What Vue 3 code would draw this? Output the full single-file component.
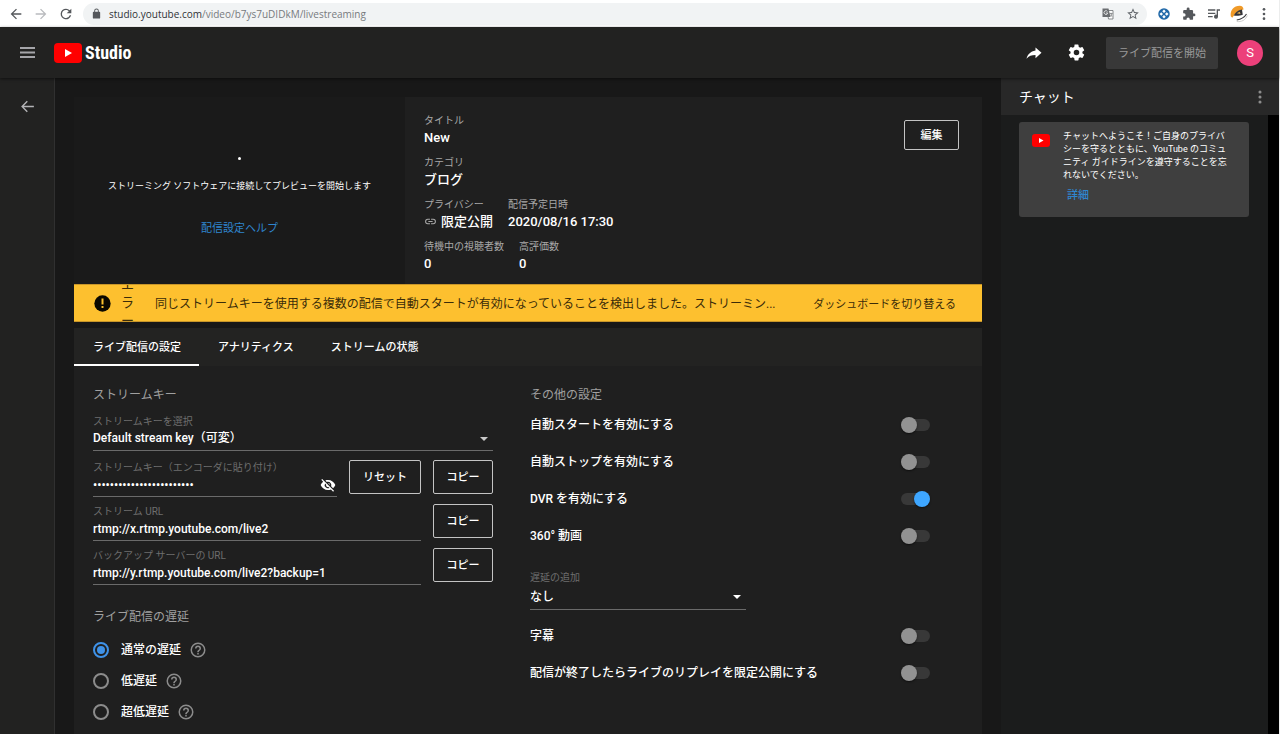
<script setup>
import { ref } from 'vue'

const details = [
  [{ label: 'タイトル', value: 'New' }],
  [{ label: 'カテゴリ', value: 'ブログ' }],
  [
    { label: 'プライバシー', value: '限定公開', link: true },
    { label: '配信予定日時', value: '2020/08/16 17:30' },
  ],
  [
    { label: '待機中の視聴者数', value: '0' },
    { label: '高評価数', value: '0' },
  ],
]

const tabs = ['ライブ配信の設定', 'アナリティクス', 'ストリームの状態']
const activeTab = ref(0)

const streamKey = ref('abcd-efgh-ijkl-mnop-qrst')
const urls = ref([
  { id: 'stream-url', label: 'ストリーム URL', value: 'rtmp://x.rtmp.youtube.com/live2' },
  { id: 'backup-url', label: 'バックアップ サーバーの URL', value: 'rtmp://y.rtmp.youtube.com/live2?backup=1' },
])

const latency = ref('normal')
const latencies = [
  { id: 'normal', label: '通常の遅延' },
  { id: 'low', label: '低遅延' },
  { id: 'ultra', label: '超低遅延' },
]

const switches = ref([
  { id: 'auto-start', label: '自動スタートを有効にする', on: false },
  { id: 'auto-stop', label: '自動ストップを有効にする', on: false },
  { id: 'dvr', label: 'DVR を有効にする', on: true },
  { id: 'video-360', label: '360° 動画', on: false },
])
const moreSwitches = ref([
  { id: 'captions', label: '字幕', on: false },
  { id: 'unlist', label: '配信が終了したらライブのリプレイを限定公開にする', on: false },
])
</script>

<template>
  <div class="window">
    <div class="browser">
      <div class="nav">
        <button class="icon-btn" aria-label="戻る">
          <svg width="16" height="16" viewBox="0 0 24 24" fill="#55585c"><path d="M20 11H7.830l5.590-5.590L12 4l-8 8 8 8 1.410-1.410L7.830 13H20z" /></svg>
        </button>
        <button class="icon-btn" aria-label="進む">
          <svg width="16" height="16" viewBox="0 0 24 24" fill="#b9bbbe"><path d="M12 4l-1.410 1.410L16.170 11H4v2h12.170l-5.580 5.590L12 20l8-8z" /></svg>
        </button>
        <button class="icon-btn" aria-label="再読み込み">
          <svg width="16" height="16" viewBox="0 0 24 24" fill="#55585c"><path d="M17.650 6.350A7.960 7.960 0 0 0 12 4a8 8 0 1 0 7.730 10h-2.080A6 6 0 1 1 12 6c1.660 0 3.140.690 4.220 1.780L13 11h7V4z" /></svg>
        </button>
      </div>
      <div class="omnibox">
        <svg width="11" height="11" viewBox="0 0 24 24" fill="#55585c"><path d="M18 8h-1V6A5 5 0 0 0 7 6v2H6a2 2 0 0 0-2 2v11a2 2 0 0 0 2 2h12a2 2 0 0 0 2-2V10a2 2 0 0 0-2-2zM9 8V6a3 3 0 0 1 6 0v2z" /></svg>
        <span class="url">studio.youtube.com<span class="path">/video/b7ys7uDIDkM/livestreaming</span></span>
        <button class="icon-btn" aria-label="翻訳">
          <svg width="12" height="12" viewBox="0 0 24 24">
            <path d="M10 5h12v17H13z" fill="#fff" stroke="#6a6d70" stroke-width="1.600" />
            <path d="M1 1h12l4 17H1z" fill="#6a6d70" />
            <path d="M11 7.300A3.700 3.700 0 1 0 11.400 10H8" fill="none" stroke="#fff" stroke-width="1.500" />
            <path d="M15 11h6M18 9.500v1.500M20 11q-1 4-4 6M16.500 13q1.500 3 4 4" fill="none" stroke="#6a6d70" stroke-width="1.300" />
          </svg>
        </button>
        <button class="icon-btn" aria-label="ブックマーク">
          <svg width="14" height="14" viewBox="0 0 24 24" fill="#5f6368"><path d="M22 9.240l-7.190-.620L12 2 9.190 8.630 2 9.240l5.460 4.730L5.820 21 12 17.270 18.180 21l-1.630-7.030zM12 15.400l-3.760 2.270 1-4.280-3.320-2.880 4.380-.380L12 6.100l1.710 4.040 4.380.380-3.320 2.880 1 4.280z" /></svg>
        </button>
      </div>
      <div class="extensions">
        <button class="icon-btn" aria-label="拡張機能 1">
          <svg width="12" height="12" viewBox="0 0 24 24"><circle cx="12" cy="12" r="11.500" fill="#2068a8" /><path d="M12 3l3.500 3.500L12 10 8.500 6.500zM12 14l3.500 3.500L12 21l-3.500-3.500zM6.500 8.500L10 12l-3.500 3.500L3 12zM17.500 8.500L21 12l-3.500 3.500L14 12z" fill="#fff" /></svg>
        </button>
        <button class="icon-btn" aria-label="拡張機能">
          <svg width="14" height="14" viewBox="0 0 24 24" fill="#55585c"><path d="M20.500 11H19V7a2 2 0 0 0-2-2h-4V3.500a2.500 2.500 0 0 0-5 0V5H4a2 2 0 0 0-2 2v3.800h1.500a2.700 2.700 0 0 1 0 5.400H2V20a2 2 0 0 0 2 2h3.800v-1.500a2.700 2.700 0 0 1 5.400 0V22H17a2 2 0 0 0 2-2v-4h1.500a2.500 2.500 0 0 0 0-5z" /></svg>
        </button>
        <button class="icon-btn" aria-label="メディア">
          <svg width="16" height="16" viewBox="0 0 24 24" fill="#55585c"><path d="M3 5h11v2H3zM3 10h11v2H3zM3 15h7v2H3zM16 5h5v2.200h-3V16a3 3 0 1 1-2-2.800z" /></svg>
        </button>
        <button class="icon-btn" aria-label="プロフィール">
          <svg width="18" height="18" viewBox="0 0 24 24"><path d="M1 15C0 7 5 1 13 1c3 0 5 2 5 5l-7 2-5 5-3 4z" fill="#f09a28" /><path d="M5 14c2-4 5-7 11-8l1 7c-4 1-7 2-12 1z" fill="#33343a" /><path d="M9 11l4-2 1 3z" fill="#e7b35b" /><path d="M9 20c6-1 10-3 13-8" fill="none" stroke="#3a3b40" stroke-width="1.500" /><path d="M9 22c6 1 12-2 14-8" fill="none" stroke="#bdbdbd" stroke-width="1" /></svg>
        </button>
        <button class="icon-btn" aria-label="メニュー">
          <svg width="16" height="16" viewBox="0 0 24 24" fill="#55585c"><circle cx="12" cy="5" r="2" /><circle cx="12" cy="12" r="2" /><circle cx="12" cy="19" r="2" /></svg>
        </button>
      </div>
    </div>

    <header class="topbar">
      <button class="icon-btn burger" aria-label="メニュー">
        <svg width="15" height="11" viewBox="0 0 15 11" fill="#a5a5a9"><path d="M0 0h15v2H0zM0 4.500h15v2H0zM0 9h15v2H0z" /></svg>
      </button>
      <a class="logo" href="#">
        <svg width="28" height="20" viewBox="0 0 28 20"><rect width="28" height="20" rx="4" fill="#f00" /><path d="M11 6l7 4-7 4z" fill="#fff" /></svg>
        <span>Studio</span>
      </a>
      <div class="actions">
        <button class="icon-btn" aria-label="共有">
          <svg width="18" height="18" viewBox="0 0 24 24" fill="#fff"><path d="M14 4.500v4.300C7 9.800 3.500 14.500 2 19.500c3-3.600 6.800-5 12-5v4.600l8-7.300z" /></svg>
        </button>
        <button class="icon-btn" aria-label="設定">
          <svg width="19" height="19" viewBox="0 0 24 24" fill="#fff"><path d="M19.430 12.980c.040-.320.070-.640.070-.980s-.030-.660-.070-.980l2.110-1.650c.190-.150.240-.420.120-.640l-2-3.460c-.120-.220-.390-.300-.610-.220l-2.490 1a7.300 7.300 0 0 0-1.690-.980l-.380-2.650A.490.490 0 0 0 14 2h-4c-.250 0-.460.180-.490.420l-.380 2.650c-.610.250-1.170.590-1.690.980l-2.490-1c-.230-.090-.490 0-.610.220l-2 3.460c-.130.220-.070.490.120.640l2.110 1.650c-.040.320-.070.650-.070.980s.030.660.070.980l-2.110 1.650c-.190.150-.240.420-.120.640l2 3.460c.120.220.390.300.610.220l2.490-1c.520.400 1.080.730 1.690.980l.380 2.650c.030.240.240.420.490.420h4c.250 0 .460-.180.490-.420l.380-2.650c.610-.250 1.170-.590 1.690-.980l2.490 1c.230.090.490 0 .610-.220l2-3.460c.120-.220.070-.490-.120-.640zM12 15.500a3.500 3.500 0 1 1 0-7 3.500 3.500 0 0 1 0 7z" /></svg>
        </button>
        <button class="go-live">ライブ配信を開始</button>
        <button class="avatar">S</button>
      </div>
    </header>

    <div class="body">
      <nav class="rail">
        <button class="icon-btn" aria-label="戻る">
          <svg width="17" height="17" viewBox="0 0 24 24" fill="#b3b3b6"><path d="M21 11H6.830l5.590-5.590L11 4l-8 8 8 8 1.410-1.410L6.830 13H21z" /></svg>
        </button>
      </nav>

      <main class="main">
        <section class="overview">
          <div class="preview">
            <span class="dot"></span>
            <p>ストリーミング ソフトウェアに接続してプレビューを開始します</p>
            <a href="#">配信設定ヘルプ</a>
          </div>
          <div class="details">
            <div class="detail-rows">
              <div v-for="(row, i) in details" :key="i" class="detail-row">
                <div v-for="item in row" :key="item.label">
                  <div class="detail-label">{{ item.label }}</div>
                  <div class="detail-value">
                    <svg v-if="item.link" width="13" height="13" viewBox="0 0 24 24" fill="#a8a8a8"><path d="M3.900 12A3.100 3.100 0 0 1 7 8.900h4V7H7a5 5 0 0 0 0 10h4v-1.900H7A3.100 3.100 0 0 1 3.900 12zM8 13h8v-2H8zM17 7h-4v1.900h4a3.100 3.100 0 0 1 0 6.200h-4V17h4a5 5 0 0 0 0-10z" /></svg>
                    <span>{{ item.value }}</span>
                  </div>
                </div>
              </div>
            </div>
            <button class="outline edit">編集</button>
          </div>
        </section>

        <section class="banner" role="alert">
          <svg width="17" height="17" viewBox="0 0 24 24"><circle cx="12" cy="12" r="11.500" fill="#0b0800" /><path d="M10.600 5h2.800v8.500h-2.800zM10.600 15.500h2.800v3h-2.800z" fill="#fbc02d" /></svg>
          <span class="kind">エラー</span>
          <span class="message">同じストリームキーを使用する複数の配信で自動スタートが有効になっていることを検出しました。ストリーミン...</span>
          <a href="#">ダッシュボードを切り替える</a>
        </section>

        <section class="panel">
          <div class="tabs" role="tablist">
            <button v-for="(tab, i) in tabs" :key="tab" role="tab" :aria-selected="activeTab === i" :class="['tab', { active: activeTab === i }]" @click="activeTab = i">{{ tab }}</button>
          </div>

          <div class="settings">
            <div class="column">
              <h2>ストリームキー</h2>
              <div class="fields">
                <div class="field key-select">
                  <label for="key">ストリームキーを選択</label>
                  <div class="control">
                    <select id="key"><option>Default stream key（可変）</option></select>
                    <svg class="caret" width="8" height="4" viewBox="0 0 8 4" fill="#c9c9c9"><path d="M0 0h8L4 4z" /></svg>
                  </div>
                </div>
                <div class="field-row">
                  <div class="field">
                    <label for="secret">ストリームキー（エンコーダに貼り付け）</label>
                    <div class="control">
                      <input id="secret" v-model="streamKey" type="password" readonly />
                      <button class="icon-btn eye" aria-label="表示">
                        <svg width="16" height="16" viewBox="0 0 24 24" fill="#fff"><path d="M12 7a5 5 0 0 1 4.640 6.830l2.920 2.920A11.800 11.800 0 0 0 23 12c-1.730-4.390-6-7.500-11-7.500-1.400 0-2.740.250-3.980.700l2.160 2.160C10.740 7.130 11.350 7 12 7zM2 4.270l2.740 2.740A11.800 11.800 0 0 0 1 12c1.730 4.390 6 7.500 11 7.500 1.550 0 3.030-.300 4.380-.840L19.730 22 21 20.730 3.270 3zM7.530 9.800l1.550 1.550A3 3 0 0 0 12.650 14.920l1.550 1.550A5 5 0 0 1 7.530 9.800zm4.310-.780l3.150 3.150.020-.160a3 3 0 0 0-3-3z" /></svg>
                      </button>
                    </div>
                  </div>
                  <button class="outline reset">リセット</button>
                  <button class="outline copy">コピー</button>
                </div>
                <div v-for="u in urls" :key="u.id" class="field-row">
                  <div class="field">
                    <label :for="u.id">{{ u.label }}</label>
                    <div class="control"><input :id="u.id" v-model="u.value" type="text" readonly /></div>
                  </div>
                  <button class="outline copy">コピー</button>
                </div>
              </div>

              <h2 class="latency-title">ライブ配信の遅延</h2>
              <div v-for="l in latencies" :key="l.id" class="radio-row">
                <input :id="l.id" v-model="latency" type="radio" name="latency" :value="l.id" />
                <label :for="l.id">{{ l.label }}</label>
                <svg width="18" height="18" viewBox="0 0 24 24" fill="#8c8c8c"><path d="M11 18h2v-2h-2zM12 2a10 10 0 1 0 0 20 10 10 0 0 0 0-20zm0 18a8 8 0 1 1 0-16 8 8 0 0 1 0 16zm0-14a4 4 0 0 0-4 4h2a2 2 0 1 1 4 0c0 2-3 1.750-3 5h2c0-2.250 3-2.500 3-5a4 4 0 0 0-4-4z" /></svg>
              </div>
            </div>

            <div class="column">
              <h2>その他の設定</h2>
              <div class="switches">
                <div v-for="s in switches" :key="s.id" class="switch-row">
                  <label :for="s.id">{{ s.label }}</label>
                  <input :id="s.id" v-model="s.on" type="checkbox" role="switch" />
                </div>
              </div>
              <div class="field delay">
                <label for="delay">遅延の追加</label>
                <div class="control">
                  <select id="delay"><option>なし</option></select>
                  <svg class="caret" width="8" height="4" viewBox="0 0 8 4" fill="#fff"><path d="M0 0h8L4 4z" /></svg>
                </div>
              </div>
              <div v-for="s in moreSwitches" :key="s.id" class="switch-row">
                <label :for="s.id">{{ s.label }}</label>
                <input :id="s.id" v-model="s.on" type="checkbox" role="switch" />
              </div>
            </div>
          </div>
        </section>
      </main>

      <aside class="chat">
        <div class="chat-head">
          <h2>チャット</h2>
          <button class="icon-btn" aria-label="その他">
            <svg width="16" height="16" viewBox="0 0 24 24" fill="#8d8d8d"><circle cx="12" cy="4.500" r="2.300" /><circle cx="12" cy="12" r="2.300" /><circle cx="12" cy="19.500" r="2.300" /></svg>
          </button>
        </div>
        <div class="chat-scroll">
          <div class="notice">
            <svg width="18" height="13" viewBox="0 0 18 13"><rect width="18" height="13" rx="3" fill="#f00" /><path d="M7 4l4.500 2.500L7 9z" fill="#fff" /></svg>
            <div>
              <p>チャットへようこそ！ご自身のプライバシーを守るとともに、YouTube のコミュニティ ガイドラインを遵守することを忘れないでください。</p>
              <a href="#">詳細</a>
            </div>
          </div>
        </div>
      </aside>
    </div>
  </div>
</template>

<style>
body {
  margin: 0;
  background: #181818;
}
</style>

<style scoped>
.window {
  display: flex;
  flex-direction: column;
  min-height: 100vh;
  box-sizing: border-box;
  padding-right: 1px;
  background: #eceded;
  color: #fff;
  font-family: Roboto, "Noto Sans CJK JP", sans-serif;
  font-size: 12px;
}
.window * {
  box-sizing: border-box;
}
button,
input,
select {
  font: inherit;
  color: inherit;
  margin: 0;
  padding: 0;
  border: 0;
  background: none;
}
button {
  cursor: pointer;
}
svg {
  display: block;
  flex: none;
}
h2,
p {
  margin: 0;
  font-weight: 400;
}
a {
  color: #2f86cf;
  text-decoration: none;
}
.icon-btn {
  display: grid;
  place-items: center;
  flex: none;
  width: 25px;
  height: 24px;
}

.browser {
  display: flex;
  align-items: center;
  height: 27px;
  padding: 0 3px;
  background: #fff;
}
.nav,
.extensions {
  display: flex;
}
.omnibox {
  display: flex;
  flex: 1;
  align-items: center;
  height: 22px;
  margin: 0 4px 0 5px;
  padding: 0 2px 0 8px;
  border-radius: 11px;
  background: #f1f3f4;
}
.url {
  flex: 1;
  margin-left: 7px;
  color: #303236;
  font-family: "Open Sans", sans-serif;
  font-size: 10px;
}
.path {
  color: #777a7e;
}

.topbar {
  position: relative;
  display: flex;
  align-items: center;
  height: 51px;
  padding: 0 16px 0 15px;
  background: #222221;
  box-shadow: 0 1px 3px #0008;
}
.logo {
  display: flex;
  align-items: center;
  gap: 3px;
  margin-left: 14px;
  color: #fff;
  font-family: "Roboto Condensed", "Liberation Sans Narrow", sans-serif;
  font-size: 18px;
  font-weight: 700;
}
.actions {
  display: flex;
  align-items: center;
  margin-left: auto;
}
.actions .icon-btn {
  width: 43px;
}
.go-live {
  height: 32px;
  margin: 0 19px 0 8px;
  padding: 0 12px 2px;
  border-radius: 2px;
  background: #383838;
  color: #989898;
  font-size: 11px;
}
.avatar {
  width: 26px;
  height: 26px;
  border-radius: 50%;
  background: #ec407a;
  font-size: 13px;
}

.body {
  display: flex;
  flex: 1;
  background: #181818;
}
.rail {
  flex: none;
  width: 55px;
  padding: 16px 15px;
  border-right: 1px solid #303030;
  background: #222221;
}
.main {
  display: flex;
  flex: 1;
  flex-direction: column;
  min-width: 0;
  padding: 19px 19px 0;
}
.overview {
  display: grid;
  grid-template-columns: 331fr 577fr;
}
.preview {
  display: flex;
  flex-direction: column;
  align-items: center;
  padding-top: 60px;
  background: #1a1a1a;
}
.dot {
  width: 3px;
  height: 3px;
  border-radius: 50%;
  background: #fff;
}
.preview p {
  margin: 19px 0 28px;
  font-size: 9px;
  line-height: 14px;
}
.preview a {
  font-size: 11px;
  line-height: 16px;
}
.details {
  display: flex;
  align-items: flex-start;
  justify-content: space-between;
  padding: 17px 23px 10px 19px;
  background: #1f1f1f;
}
.detail-rows {
  display: grid;
  gap: 8px;
}
.detail-row {
  display: flex;
  gap: 15px;
  height: 34px;
}
.detail-label {
  color: #a8a8a8;
  font-size: 10px;
  line-height: 14px;
}
.detail-value {
  display: flex;
  align-items: center;
  gap: 4px;
  font-size: 13px;
  font-weight: 500;
  line-height: 19px;
}
.outline {
  flex: none;
  height: 34px;
  padding-bottom: 2px;
  border: 1px solid #c4c4c4;
  border-radius: 2px;
  font-size: 11px;
  font-weight: 500;
}
.edit {
  width: 55px;
  height: 30px;
  margin-top: 6px;
}

.banner {
  display: flex;
  align-items: center;
  height: 38px;
  padding: 0 26px 0 20px;
  overflow: hidden;
  border: solid #c8962a;
  border-width: 1px 0;
  background: #fdc02f;
  color: #3a2c09;
}
.kind {
  flex: none;
  width: 13px;
  margin: 0 21px 0 10px;
  font-size: 13px;
  line-height: 18px;
  word-break: break-all;
  line-break: anywhere;
}
.message {
  flex: 1;
  min-width: 0;
  padding-bottom: 2px;
  overflow: hidden;
  font-size: 12px;
  white-space: nowrap;
}
.banner a {
  flex: none;
  margin-left: 12px;
  color: inherit;
  font-size: 11px;
}

.panel {
  flex: 1;
  margin-top: 6px;
  background: #1f1f1f;
}
.tabs {
  display: flex;
  height: 38px;
  background: #232322;
}
.tab {
  padding: 0 18px 0 19px;
  border-bottom: 2px solid transparent;
  font-size: 11px;
  font-weight: 500;
}
.tab.active {
  border-bottom-color: #fff;
}
.settings {
  display: grid;
  grid-template-columns: 1fr 1fr;
  gap: 37px;
  padding: 19px 52px 6px 19px;
}
.settings h2 {
  color: #a0a0a0;
  font-size: 12px;
  line-height: 20px;
}
.fields {
  display: grid;
  gap: 7px;
  margin-top: 9px;
}
.key-select {
  margin-bottom: 2px;
}
.field {
  flex: 1;
  min-width: 0;
}
.field label {
  display: block;
  height: 14px;
  color: #6e6e6e;
  font-size: 10px;
  line-height: 16px;
}
.control {
  display: flex;
  align-items: center;
  height: 23px;
  border-bottom: 1px solid #6a6a6a;
}
.control input,
.control select {
  flex: 1;
  min-width: 0;
  appearance: none;
  outline: 0;
  font-size: 12px;
  font-weight: 500;
}
.key-select select {
  padding-bottom: 2px;
}
.caret {
  margin-right: 5px;
}
.eye {
  width: 18px;
  height: 20px;
}
.field-row {
  display: flex;
  gap: 12px;
}
.reset {
  width: 72px;
}
.copy {
  width: 60px;
}
.settings .latency-title {
  margin: 22px 0 7px;
}
.radio-row {
  display: flex;
  align-items: center;
  height: 31px;
}
.radio-row label {
  margin: 0 8px 0 12px;
  padding-bottom: 2px;
  font-size: 12px;
  font-weight: 500;
}
.radio-row input {
  display: grid;
  place-items: center;
  width: 16px;
  height: 16px;
  border: 2px solid #8c8c8c;
  border-radius: 50%;
  appearance: none;
}
.radio-row input:checked {
  border-color: #3f92e8;
}
.radio-row input:checked::before {
  content: "";
  width: 8px;
  height: 8px;
  border-radius: 50%;
  background: #3f92e8;
}
.switches {
  margin-top: 1px;
}
.switch-row {
  display: flex;
  align-items: center;
  justify-content: space-between;
  height: 37px;
  font-size: 12px;
  font-weight: 500;
}
.switch-row label {
  padding-bottom: 2px;
}
.switch-row input {
  display: flex;
  align-items: center;
  width: 29px;
  height: 12px;
  border-radius: 6px;
  background: #383838;
  appearance: none;
}
.switch-row input::before {
  content: "";
  flex: none;
  width: 16px;
  height: 16px;
  border-radius: 50%;
  background: #929292;
  box-shadow: 0 1px 2px #0008;
}
.switch-row input:checked {
  justify-content: flex-end;
}
.switch-row input:checked::before {
  background: #3ea6ff;
}
.delay {
  width: 54%;
  margin: 16px 0 7px;
}
.delay .control {
  height: 26px;
}

.chat {
  display: flex;
  flex: none;
  flex-direction: column;
  width: 278px;
}
.chat-head {
  display: flex;
  align-items: center;
  justify-content: space-between;
  height: 37px;
  padding: 0 7px 0 18px;
  background: #282828;
}
.chat-head h2 {
  padding-bottom: 2px;
  font-size: 14px;
}
.chat-scroll {
  flex: 1;
  padding: 7px 19px 0 18px;
  border-right: 11px solid #000;
  background: #1b1c1c;
}
.notice {
  display: flex;
  gap: 13px;
  padding: 8px 13px 12px;
  border-radius: 3px;
  background: #3f3f3f;
  font-size: 9px;
  font-weight: 500;
}
.notice > svg {
  margin-top: 4px;
}
.notice p {
  width: 170px;
  line-height: 13px;
}
.notice a {
  display: block;
  margin: 5px 0 0 4px;
  font-size: 11px;
  line-height: 18px;
}
</style>
